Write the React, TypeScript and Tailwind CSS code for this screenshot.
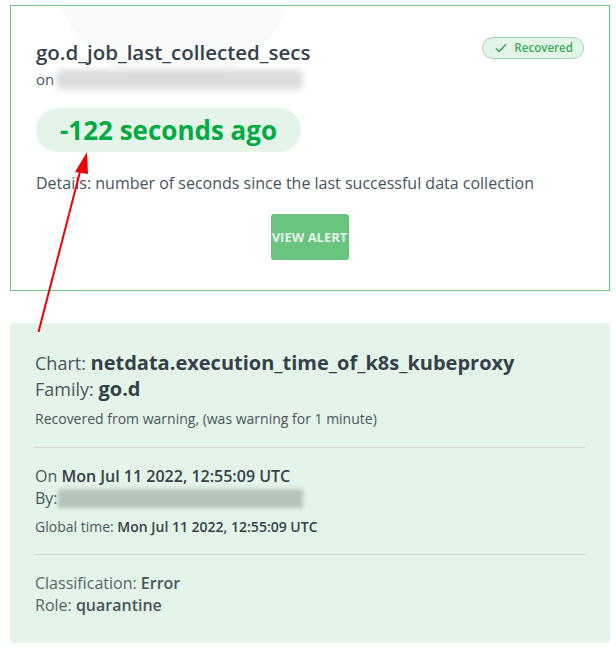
export default function App() {
  return (
    <div className="relative w-[616px] h-[649px] overflow-hidden bg-white font-['Open_Sans',sans-serif] text-[#35414a]">
      <div className="pt-[5px] pl-[10px] pr-[6px]">
        <div className="relative overflow-hidden h-[286px] border border-[#68c47f] px-[25px] pt-[34px]">
          {/* faint circle behind the heading */}
          <div className="absolute left-[40px] top-[-169px] w-[246px] h-[246px] rounded-full bg-[#f8fbf9]" />

          <div className="relative flex items-start justify-between">
            <div>
              <h1 className="text-[20.5px] leading-[24px] font-semibold">go.d_job_last_collected_secs</h1>
              <div className="flex items-center h-[24px] mt-[3px] text-[15px] text-[#4b555d]">
                <span>on</span>
                <div className="ml-[3px] w-[245px] h-[19px] bg-[#d9dbdc] blur-[3px]" />
              </div>
            </div>
            <div className="flex items-center h-[22px] mt-[-3px] pl-[12px] pr-[10px] gap-[7px] rounded-full border border-[#9fd8ae] bg-[#e5f4e9] text-[11.6px] font-semibold text-[#3fa85c]">
              <svg width="12" height="10" viewBox="0 0 12 10" fill="none" stroke="currentColor" strokeWidth="1.6">
                <path d="M1 5.5 L4.2 8.5 L11 1.2" />
              </svg>
              <span>Recovered</span>
            </div>
          </div>

          <div className="relative mt-[17px] w-[265px] h-[44px] pt-[1px] rounded-full bg-[#e5f4e9] flex items-center justify-center text-[26px] font-bold text-[#00ab44]">
            -122 seconds ago
          </div>

          <p className="mt-[20px] text-[16px] leading-[22px] text-[#465460]">
            Details: number of seconds since the last successful data collection
          </p>

          <div className="flex justify-center mt-[20px]">
            <div className="flex items-center justify-center w-[78px] h-[46px] ml-[-1px] pt-[1px] rounded-[3px] bg-[#68c47f] text-[13px] font-bold text-[#e5f4e9] whitespace-nowrap">
              VIEW ALERT
            </div>
          </div>
        </div>

        <div className="mt-[32px] h-[320px] rounded-[4px] bg-[#e5f4e9] px-[25px] pt-[27px]">
          <div className="text-[18px] leading-[26px] text-[#4b555d]">
            Chart: <b className="font-bold text-[20px] text-[#35414a]">netdata.execution_time_of_k8s_kubeproxy</b>
          </div>
          <div className="text-[18px] leading-[26px] text-[#4b555d]">
            Family: <b className="font-bold text-[20px] text-[#35414a]">go.d</b>
          </div>
          <p className="mt-[7px] text-[14px] leading-[20px] text-[#4b555d]">
            Recovered from warning, (was warning for 1 minute)
          </p>

          <div className="mt-[18px] border-t border-[#d0d6d1]" />

          <div className="mt-[17px] text-[16px] leading-[22px] text-[#4b555d]">
            On <b className="font-semibold text-[#35414a]">Mon Jul 11 2022, 12:55:09 UTC</b>
          </div>
          <div className="flex items-center h-[22px] text-[16px] text-[#4b555d]">
            <span>By:</span>
            <div className="w-[245px] h-[19px] bg-[#b4c4ba] blur-[2px]" />
          </div>
          <p className="mt-[8px] text-[14px] leading-[20px] text-[#4b555d]">
            Global time: <b className="font-semibold text-[#35414a]">Mon Jul 11 2022, 12:55:09 UTC</b>
          </p>

          <div className="mt-[17px] border-t border-[#d0d6d1]" />

          <div className="mt-[17px] text-[16px] leading-[22px] text-[#5b6469]">
            Classification: <b className="font-semibold text-[#4b555d]">Error</b>
          </div>
          <div className="text-[16px] leading-[22px] text-[#5b6469]">
            Role: <b className="font-semibold text-[#4b555d]">quarantine</b>
          </div>
        </div>
      </div>

      {/* red annotation arrow */}
      <svg className="absolute left-0 top-0 pointer-events-none" width="616" height="649" fill="none">
        <line x1="38.5" y1="332" x2="81" y2="168" stroke="#f00000" strokeWidth="2" />
        <path d="M87 152 L75 172 L88 174 Z" fill="#f00000" />
      </svg>
    </div>
  );
}
